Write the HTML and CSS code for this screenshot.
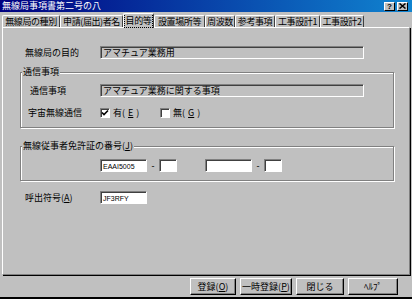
FILE: index.html
```html
<!DOCTYPE html>
<html lang="ja">
<head>
  <meta charset="UTF-8" />
  <title>無線局事項書第二号の八</title>
  <link rel="stylesheet" href="styles.css">
</head>
<body>
  <div class="window">
    <div class="titlebar">
      <span class="title">無線局事項書第二号の八</span>
      <span class="tbtn">?</span>
      <span class="tbtn">
        <svg width="7" height="6" viewBox="0 0 7 6"><path d="M0.5 0.5 L6.5 5.5 M6.5 0.5 L0.5 5.5" stroke="#000" stroke-width="1.5"/></svg>
      </span>
    </div>

    <div class="tabs">
      <div class="tab w58">無線局の種別</div>
      <div class="tab w63">申請(届出)者名</div>
      <div class="tab tab-active w31"><span class="focus">目的等</span></div>
      <div class="tab w51">設置場所等</div>
      <div class="tab w30">周波数</div>
      <div class="tab w40">参考事項</div>
      <div class="tab w45">工事設計1</div>
      <div class="tab w44">工事設計2</div>
    </div>

    <div class="panel">
      <div class="row row-purpose">
        <span class="label">無線局の目的</span>
        <span class="field ro f-wide">アマチュア業務用</span>
      </div>

      <fieldset class="group group-comm">
        <legend>通信事項</legend>
        <div class="row row-comm">
          <span class="label">通信事項</span>
          <span class="field ro f-wide">アマチュア業務に関する事項</span>
        </div>
        <div class="row row-space">
          <span class="label">宇宙無線通信</span>
          <span class="check">
            <span class="box"><svg width="8" height="8" viewBox="0 0 8 8"><path d="M1 3.5 L3 5.5 L7 1.5" fill="none" stroke="#000" stroke-width="1.6"/></svg></span>
            有(<u>E</u>)
          </span>
          <span class="check check-no">
            <span class="box"></span>
            無(<u>G</u>)
          </span>
        </div>
      </fieldset>

      <fieldset class="group group-license">
        <legend>無線従事者免許証の番号(<u>J</u>)</legend>
        <div class="row row-license">
          <span class="field f-mid latin">EAAI5005</span>
          <span class="dash">-</span>
          <span class="field f-small"></span>
          <span class="field f-mid f-gap"></span>
          <span class="dash">-</span>
          <span class="field f-small"></span>
        </div>
      </fieldset>

      <div class="row row-call">
        <span class="label">呼出符号(<u>A</u>)</span>
        <span class="field f-mid latin">JF3RFY</span>
      </div>
    </div>

    <div class="footer">
      <button class="btn b46">登録(<u>O</u>)</button>
      <button class="btn b52">一時登録(<u>P</u>)</button>
      <button class="btn b48">閉じる</button>
      <button class="btn b50">ﾍﾙﾌﾟ</button>
    </div>
  </div>
</body>
</html>
```

FILE: styles.css
```css
body {
  margin: 0;
  padding: 0;
  background: #c0c0c0;
}
.window {
  width: 412px;
  height: 299px;
  box-sizing: border-box;
  background: #c0c0c0;
  font-family: "Noto Sans CJK JP", "Noto Sans", sans-serif;
  font-size: 9px;
  color: #000;
  overflow: hidden;
  border-bottom: 2px solid #000;
}
u {
  text-decoration: underline;
}

/* title bar */
.titlebar {
  height: 12px;
  display: flex;
  align-items: center;
  padding: 0 4px 0 2px;
  background: linear-gradient(to right, #000080, #1084d0);
}
.title {
  flex: 1;
  color: white;
  line-height: 12px;
}
.tbtn {
  width: 11px;
  height: 9px;
  box-sizing: border-box;
  margin-left: 2px;
  background: #c0c0c0;
  border: 1px solid;
  border-color: #fff #000 #000 #fff;
  display: flex;
  align-items: center;
  justify-content: center;
  font: bold 8px "Liberation Sans", sans-serif;
  line-height: 7px;
}

/* tabs */
.tabs {
  height: 15px;
  display: flex;
  align-items: flex-end;
  padding-left: 2px;
}
.tab {
  height: 12px;
  box-sizing: border-box;
  border-top: 1px solid #fff;
  border-left: 1px solid #fff;
  border-right: 1px solid #404040;
  border-radius: 2px 2px 0 0;
  text-align: center;
  line-height: 11px;
  letter-spacing: -0.4px;
  white-space: nowrap;
  overflow: hidden;
}
.tab-active {
  height: 15px;
  margin-bottom: -1px;
  position: relative;
  z-index: 1;
  background: #c0c0c0;
  line-height: 13px;
}
.focus {
  outline: 1px dotted #000;
  outline-offset: 0;
  padding: 0 1px;
}
.w58 { width: 58px; }
.w63 { width: 63px; }
.w31 { width: 31px; }
.w51 { width: 51px; }
.w30 { width: 30px; }
.w40 { width: 40px; }
.w45 { width: 45px; }
.w44 { width: 44px; }

/* panel */
.panel {
  height: 248px;
  box-sizing: border-box;
  margin-left: 2px;
  width: 408px;
  border-top: 1px solid #fff;
  border-left: 1px solid #fff;
  border-right: 1px solid #808080;
  border-bottom: 1px solid #808080;
  box-shadow: 1px 1px 0 #000;
}
.row {
  display: flex;
  align-items: center;
  height: 13px;
}
.label {
  white-space: nowrap;
}
.row-purpose {
  margin-top: 18px;
  padding-left: 22px;
}
.row-purpose .label,
.row-call .label {
  width: 75px;
}
.row-call {
  margin-top: 10px;
  padding-left: 22px;
}

/* group boxes */
.group {
  margin: 0 0 0 17px;
  padding: 0;
  width: 374px;
  box-sizing: border-box;
  min-inline-size: 0;
  border: 1px solid #808080;
  box-shadow: 1px 1px 0 #fff, inset 1px 1px 0 #fff;
}
.group legend {
  margin-left: 1px;
  padding: 0 1px;
  line-height: 12px;
  background: #c0c0c0;
}
.group-comm {
  margin-top: 7px;
  padding-bottom: 8px;
}
.group-license {
  margin-top: 12px;
  padding-bottom: 8px;
}
.row-comm {
  margin-top: 6px;
  padding-left: 9px;
}
.row-comm .label {
  width: 70px;
}
.row-space {
  margin-top: 9px;
  padding-left: 7px;
}
.row-space .label {
  width: 72px;
}
.row-license {
  margin-top: 7px;
  padding-left: 79px;
}

/* fields */
.field {
  height: 13px;
  box-sizing: border-box;
  background: #fff;
  border: 1px solid;
  border-color: #808080 #fff #fff #808080;
  box-shadow: inset 1px 1px 0 #404040;
  padding-left: 2px;
  line-height: 11px;
  white-space: nowrap;
  overflow: hidden;
}
.ro {
  background: #c0c0c0;
}
.f-wide { width: 264px; }
.f-mid { width: 47px; }
.f-small { width: 18px; }
.f-gap { margin-left: 28px; }
.latin {
  font-family: "Liberation Sans", sans-serif;
  font-size: 7px;
  padding-top: 1px;
}
.dash {
  width: 12px;
  text-align: center;
  font-family: "Liberation Sans", sans-serif;
}

/* checkboxes */
.check {
  display: flex;
  align-items: center;
  gap: 3px;
  width: 60px;
}
.box {
  width: 10px;
  height: 10px;
  box-sizing: border-box;
  background: #fff;
  border: 1px solid;
  border-color: #808080 #fff #fff #808080;
  box-shadow: inset 1px 1px 0 #404040;
  display: flex;
  align-items: center;
  justify-content: center;
}

/* footer */
.footer {
  display: flex;
  justify-content: flex-end;
  gap: 4px;
  padding: 3px 14px 0 0;
}
.btn {
  height: 17px;
  padding: 0;
  background: #c0c0c0;
  border: 1px solid;
  border-color: #fff #000 #000 #fff;
  box-shadow: inset -1px -1px 0 #808080;
  font: inherit;
  color: #000;
  line-height: 14px;
}
.b46 { width: 46px; }
.b52 { width: 52px; }
.b48 { width: 48px; }
.b50 { width: 50px; }
```
